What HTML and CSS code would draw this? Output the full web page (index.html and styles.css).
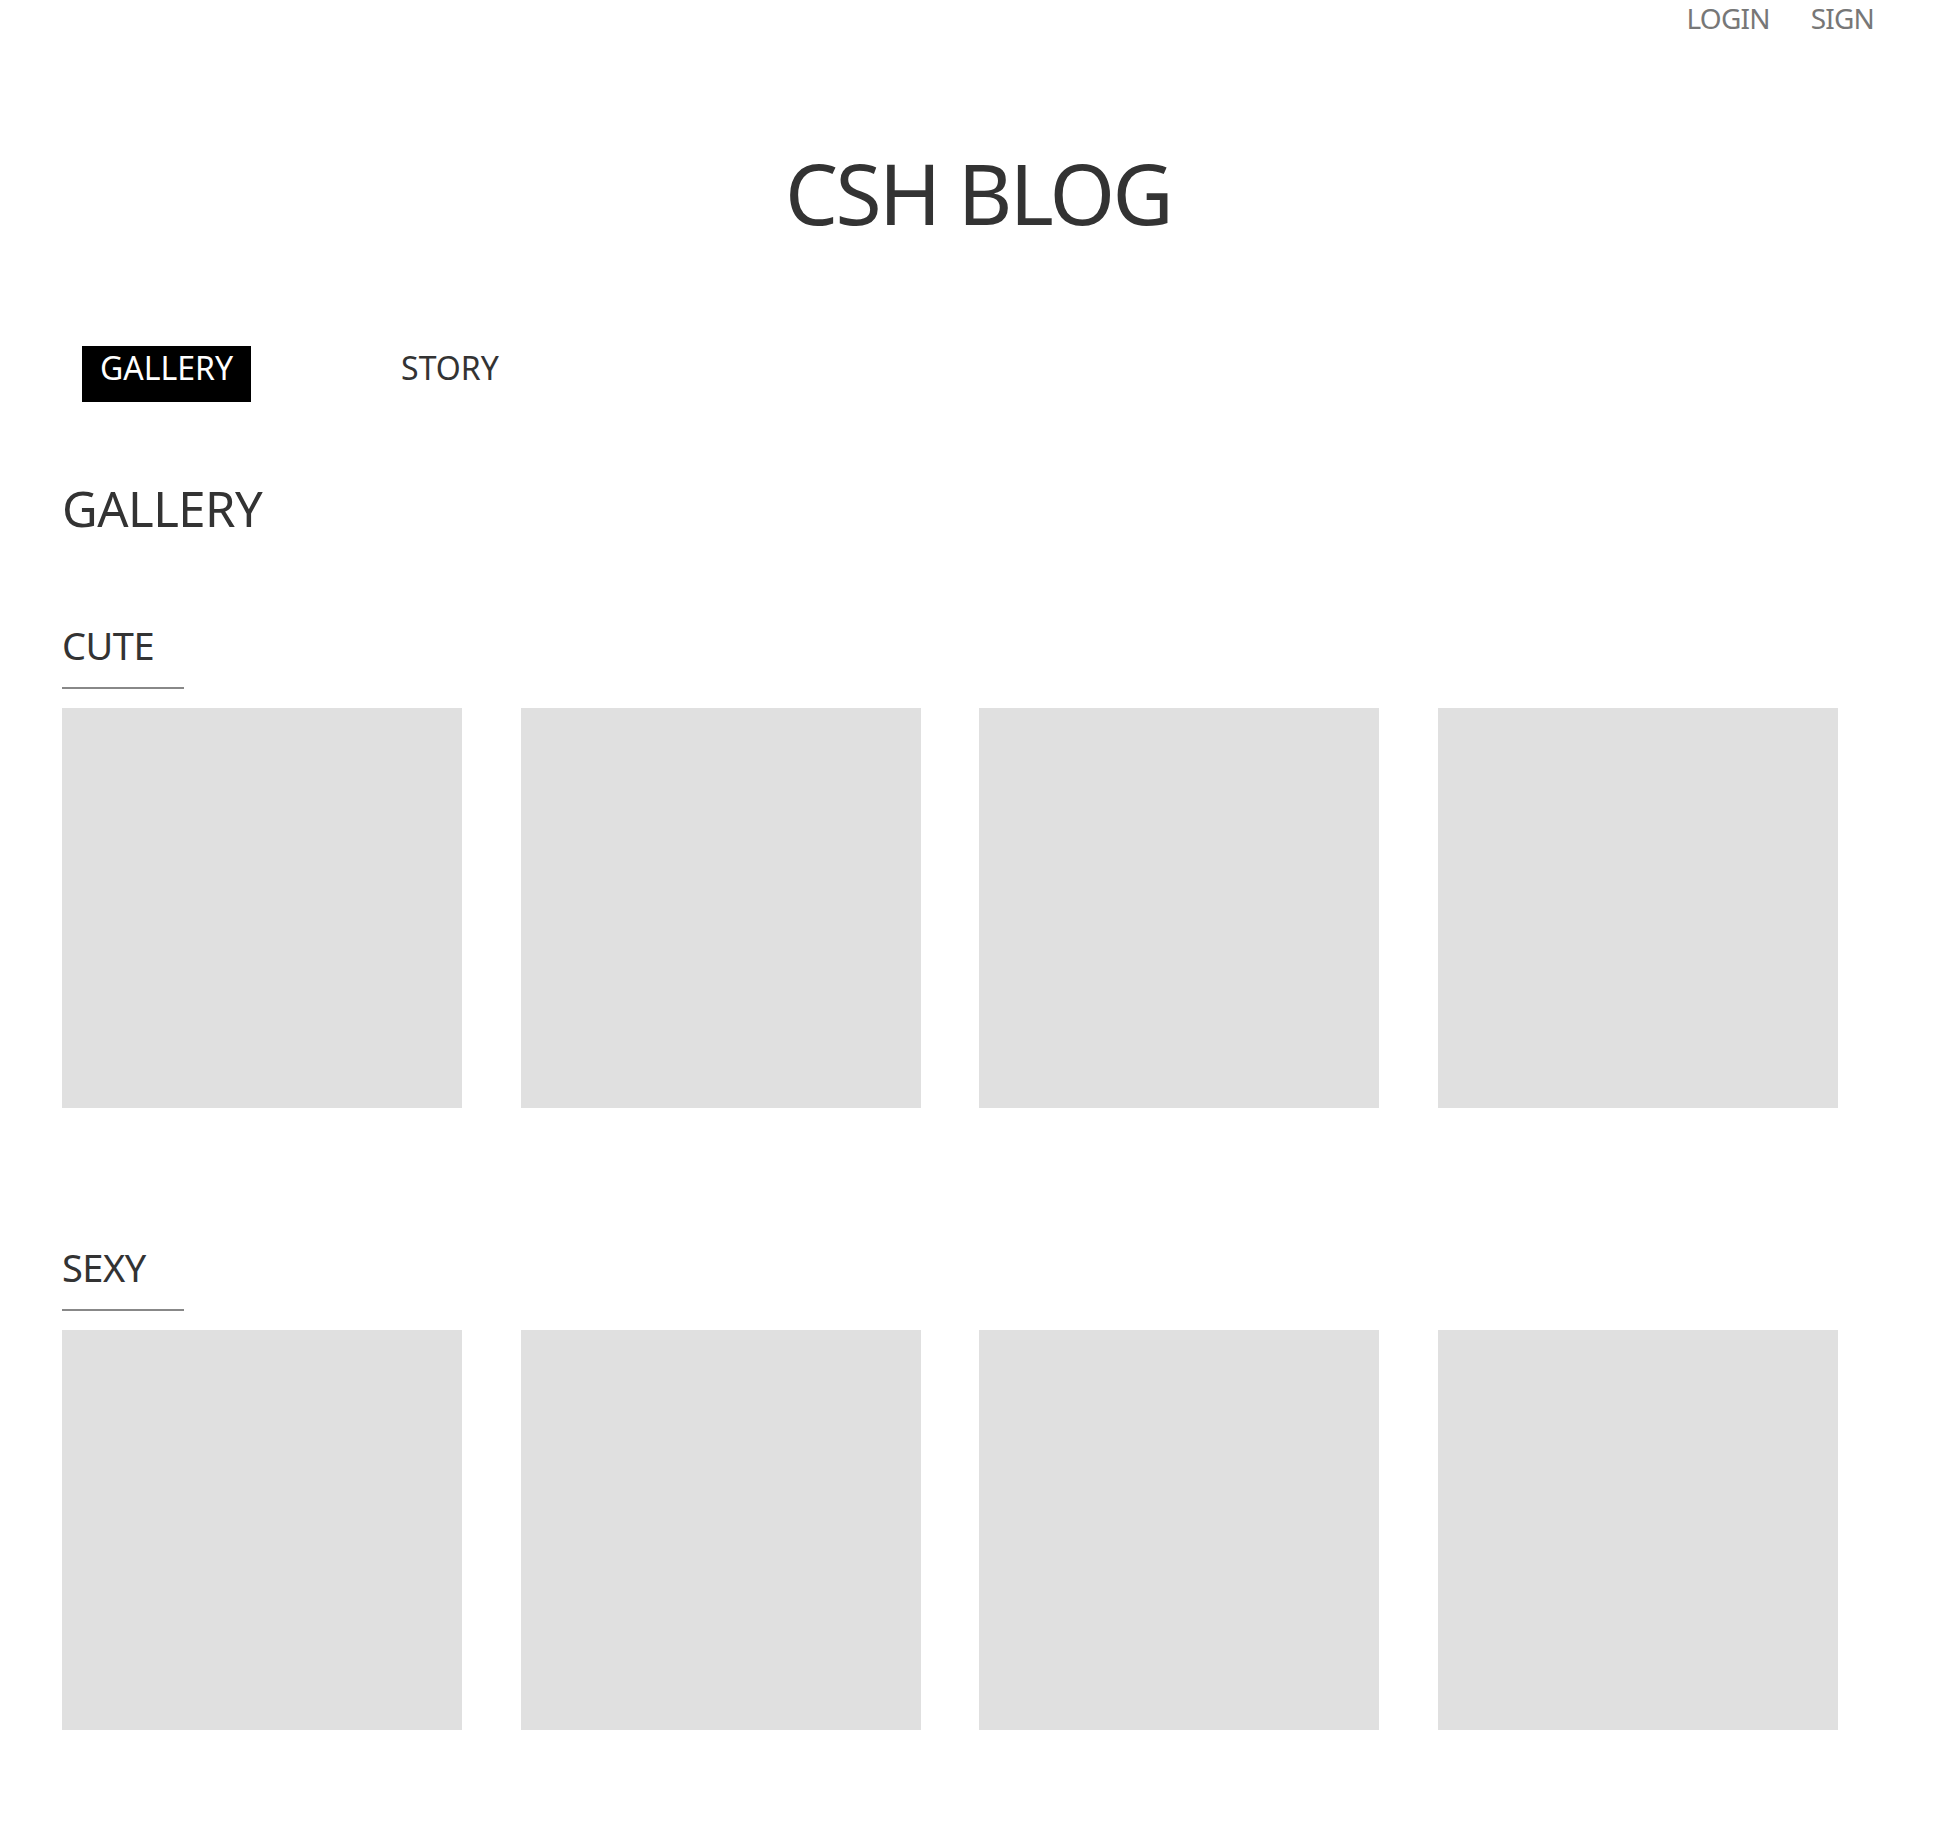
FILE: index.html
```html
<!DOCTYPE html>
<html lang="ko">
<head>
<meta charset="utf-8">
<title>CSH BLOG</title>
<link rel="stylesheet" href="styles.css">
</head>
<body>
<header class="top">
  <div class="util">
    <a href="#" class="util-link">LOGIN</a>
    <a href="#" class="util-link">SIGN</a>
  </div>
  <h1 class="logo">CSH BLOG</h1>
  <nav class="gnb">
    <a href="#" class="gnb-item is-active">GALLERY</a>
    <a href="#" class="gnb-item">STORY</a>
  </nav>
</header>
<main class="content">
  <h2 class="page-title">GALLERY</h2>
  <section class="cat">
    <h3 class="cat-title">CUTE</h3>
    <div class="grid">
      <div class="thumb"></div>
      <div class="thumb"></div>
      <div class="thumb"></div>
      <div class="thumb"></div>
    </div>
  </section>
  <section class="cat">
    <h3 class="cat-title">SEXY</h3>
    <div class="grid">
      <div class="thumb"></div>
      <div class="thumb"></div>
      <div class="thumb"></div>
      <div class="thumb"></div>
    </div>
  </section>
</main>
</body>
</html>
```
FILE: styles.css
```css
* { box-sizing: border-box; }
html, body { margin: 0; padding: 0; background: #fff; }
body {
  font-family: "Noto Sans", "Open Sans", sans-serif;
  color: #333;
}
a { text-decoration: none; color: inherit; }

.util {
  display: flex;
  justify-content: flex-end;
  gap: 41px;
  padding: 4px 82px 0 0;
  font-size: 28px;
  line-height: 28px;
  color: #777;
  letter-spacing: -0.8px;
}

.logo {
  margin: 119px 0 0;
  font-size: 84px;
  line-height: 84px;
  font-weight: 400;
  text-align: center;
  letter-spacing: -2.6px;
  color: #333;
}

.gnb {
  display: flex;
  gap: 132px;
  margin-top: 111px;
  padding-left: 82px;
}
.gnb-item {
  display: block;
  padding: 6px 18px 18px;
  font-size: 32px;
  line-height: 32px;
  letter-spacing: 0;
  color: #333;
}
.gnb-item.is-active {
  background: #000;
  color: #fff;
}

.content {
  padding: 0 118px 0 62px;
}
.page-title {
  margin: 82px 0 0;
  font-size: 49px;
  line-height: 49px;
  font-weight: 400;
  letter-spacing: -0.5px;
}
.cat { margin-top: 93px; }
.cat + .cat { margin-top: 140px; }
.cat-title {
  width: 122px;
  margin: 0;
  padding-bottom: 23px;
  border-bottom: 2px solid #888;
  font-size: 38px;
  line-height: 38px;
  font-weight: 400;
  letter-spacing: -0.5px;
}
.grid {
  display: flex;
  justify-content: space-between;
  margin-top: 19px;
}
.thumb {
  width: 400px;
  height: 400px;
  background: #e0e0e0;
}
```
